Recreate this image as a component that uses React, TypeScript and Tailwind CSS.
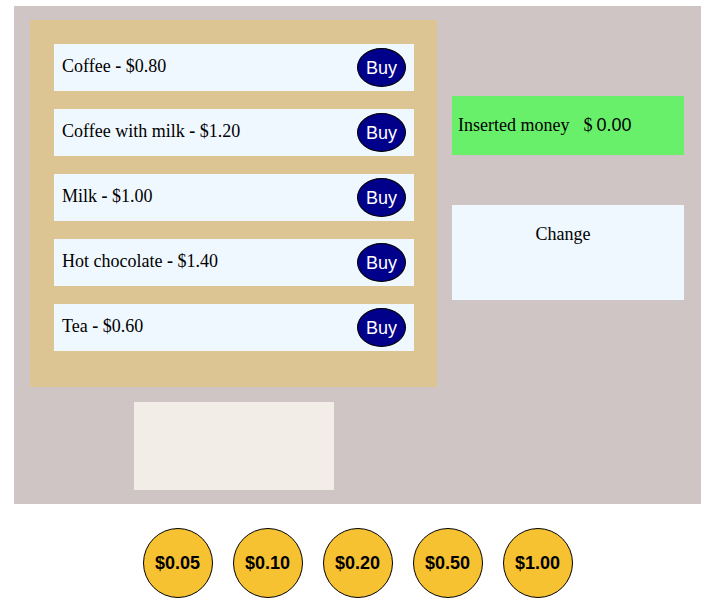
import React, { useState } from 'react';

const products = [
  { name: 'Coffee', price: 0.8 },
  { name: 'Coffee with milk', price: 1.2 },
  { name: 'Milk', price: 1.0 },
  { name: 'Hot chocolate', price: 1.4 },
  { name: 'Tea', price: 0.6 },
];

const coins = [0.05, 0.1, 0.2, 0.5, 1.0];

const App: React.FC = () => {
  const [inserted, setInserted] = useState(0);

  return (
    <div className="min-h-screen bg-white font-['Liberation_Serif',serif] text-black">
      <div className="ml-[14px] mt-[6px] flex w-[687px] bg-[#cfc5c4] pb-[14px] pl-[16px] pt-[14px]">
        {/* Left: product list + tray */}
        <div className="flex flex-col items-center">
          <div className="flex w-[407px] flex-col gap-[18px] bg-[#ddc493] pb-[36px] pl-[24px] pr-[23px] pt-[24px]">
            {products.map((p) => (
              <div
                key={p.name}
                className="flex h-[47px] items-center justify-between bg-[#f0f8ff] pl-[8px] pr-[8px] text-[18px]"
              >
                <span className="-mt-[2px]">
                  {p.name} <b>-</b> ${p.price.toFixed(2)}
                </span>
                <button className="h-[39px] w-[49px] rounded-[50%] border border-black bg-[#00008b] font-['Liberation_Sans',sans-serif] text-[18px] leading-none text-white">
                  Buy
                </button>
              </div>
            ))}
          </div>
          <div className="mt-[15px] h-[88px] w-[200px] bg-[#f2ede6]" />
        </div>

        {/* Right: money panels */}
        <div className="ml-[15px] flex flex-col">
          <div className="mt-[76px] flex h-[59px] w-[232px] items-center bg-[#69f06b] pl-[6px] text-[18px]">
            <span>Inserted money</span>
            <span className="ml-[14px]">$</span>
            <span className="ml-[4px] font-['Liberation_Sans',sans-serif] text-[18px]">
              {inserted.toFixed(2)}
            </span>
          </div>
          <div className="mt-[50px] h-[95px] w-[232px] bg-[#f0f8ff] pt-[16px] text-[18px]">
            <div className="pr-[10px] text-center">Change</div>
          </div>
        </div>
      </div>

      {/* Coins */}
      <div className="ml-[14px] mt-[24px] flex w-[687px] justify-center gap-[20px]">
        {coins.map((c) => (
          <button
            key={c}
            onClick={() => setInserted((v) => v + c)}
            className="flex h-[70px] w-[70px] items-center justify-center rounded-full border border-black bg-[#f7c232] font-['Liberation_Sans',sans-serif] text-[18px] font-bold"
          >
            ${c.toFixed(2)}
          </button>
        ))}
      </div>
    </div>
  );
};

export default App;
